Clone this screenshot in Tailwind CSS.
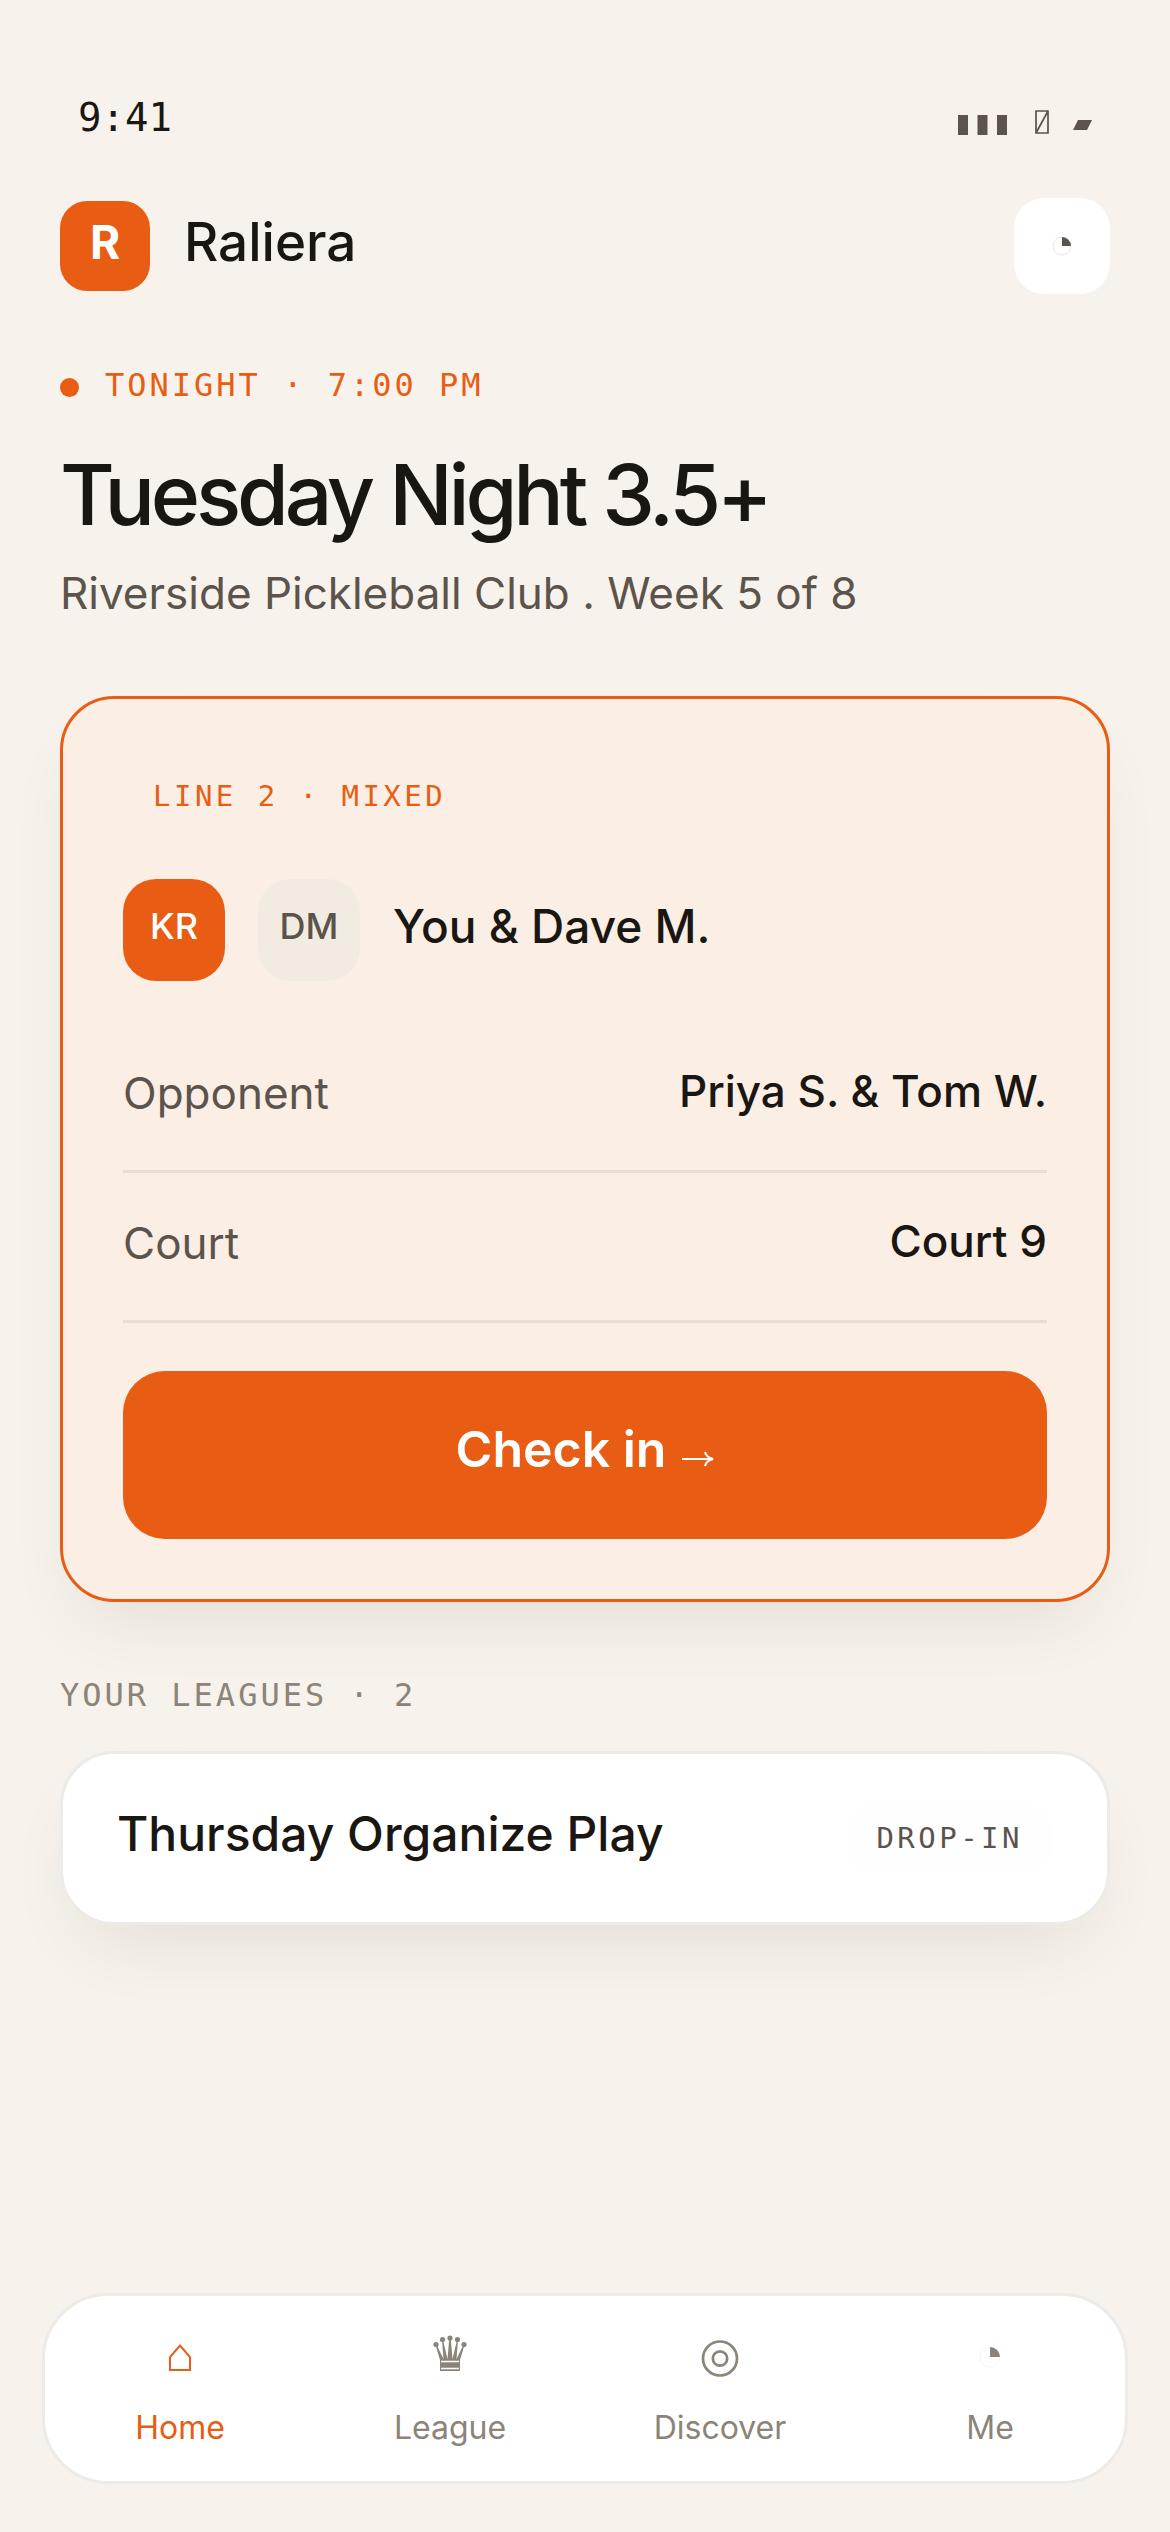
<!DOCTYPE html>
<html lang="en">

<head>
    <meta charset="UTF-8" />
    <meta name="viewport" content="width=device-width, initial-scale=1.0" />
    <script src="https://cdn.jsdelivr.net/npm/@tailwindcss/browser@4"></script>
    <title>Raliera</title>
</head>

<body class="bg-[#f7f2eb] text-[#1a1612] font-['Inter',sans-serif] flex flex-col min-h-screen">
    <div class="flex items-center justify-between h-15 mt-[88px] px-[78px] font-['DejaVu_Sans_Mono',monospace]">
        <p class="text-[39px] leading-15">9:41</p>
        <svg class="w-[134px] h-6 mt-3 overflow-visible" viewBox="0 0 134 24" fill="#5c544c" aria-hidden="true">
            <path d="M0 3h10v20H0zM19.500 3h10v20h-10zM39 3h10v20H39z" />
            <path d="M78 -1h12v22H78zM78 21L90 -1" fill="none" stroke="#5c544c" stroke-width="1.700" />
            <path d="M120 8h14l-5 10h-14z" />
        </svg>
    </div>

    <header class="flex items-center justify-between mt-[50px] px-15">
        <a class="flex items-center gap-[34px]" href="/">
            <span class="flex justify-center items-center size-[90px] pb-2 rounded-[27px] bg-[#e85d13] text-white text-[46px] leading-[54px] font-bold">R</span>
            <span class="pb-2 text-[53px] leading-15 font-medium">Raliera</span>
        </a>
        <button type="button" aria-label="Activity" class="flex items-center justify-center size-24 rounded-[30px] bg-white">
            <svg class="size-5" viewBox="0 0 20 20">
                <circle cx="10" cy="10" r="9" fill="none" stroke="#d8d5d1" stroke-width="0.600" />
                <path d="M10 1a9 9 0 0 1 9 9h-9z" fill="#5c544c" />
            </svg>
        </button>
    </header>

    <main class="flex-1 px-15 pt-[73px] pb-12">
        <p class="flex items-center gap-[26px] text-[#e85d13] font-['DejaVu_Sans_Mono',monospace] text-[32px] leading-9 tracking-[3px]">
            <span class="size-[19px] mt-1 rounded-full bg-[#e85d13]"></span>
            TONIGHT · 7:00 PM
        </p>
        <h1 class="mt-[47px] text-[84px] leading-[90px] font-medium tracking-tighter">Tuesday Night 3.5+</h1>
        <p class="mt-[26px] text-[44px] leading-[54px] text-[#5c544c]">Riverside Pickleball Club . Week 5 of 8</p>

        <section class="mt-[76px] p-15 rounded-[54px] border-3 border-[#e85d13] bg-[#fbeee4] shadow-[0_36px_72px_-24px_rgba(40,40,20,0.1)]">
            <p class="px-[30px] text-[#e85d13] font-['DejaVu_Sans_Mono',monospace] text-[29px] leading-[75px] tracking-[0.12em]">LINE 2 · MIXED</p>
            <div class="flex items-center gap-[33px] mt-[45px]">
                <span class="flex items-center justify-center size-[102px] pb-2 rounded-[33px] bg-[#e85d13] text-white text-[36px] leading-12 font-medium">KR</span>
                <span class="flex items-center justify-center size-[102px] pb-2 rounded-[33px] bg-[#f2ebe1] text-[#5c544c] text-[36px] leading-12 font-medium">DM</span>
                <p class="pb-2 text-[46px] leading-15 font-medium">You &amp; Dave M.</p>
            </div>
            <dl class="mt-[42px]">
                <div class="flex items-center justify-between pt-9 pb-[47px] border-b-3 border-[#e9dcd2]">
                    <dt class="pt-1 text-[44px] leading-15 text-[#5c544c]">Opponent</dt>
                    <dd class="text-[44px] leading-15 font-medium">Priya S. &amp; Tom W.</dd>
                </div>
                <div class="flex items-center justify-between pt-9 pb-[47px] border-b-3 border-[#e9dcd2]">
                    <dt class="pt-1 text-[44px] leading-15 text-[#5c544c]">Court</dt>
                    <dd class="text-[44px] leading-15 font-medium">Court 9</dd>
                </div>
            </dl>
            <button type="button" class="flex items-center justify-center gap-4 w-full h-42 mt-12 pb-3 rounded-[42px] bg-[#e85d13] text-white text-[50px] leading-15 font-semibold">
                Check in
                <svg class="w-8 h-4 mt-5" viewBox="0 0 32 16" fill="none" stroke="currentColor" stroke-width="2">
                    <path d="M0 8h30M23 1c1 4 4 6 8 7c-4 1-7 3-8 7" />
                </svg>
            </button>
        </section>

        <h2 class="mt-[75px] text-[#8c8478] font-['DejaVu_Sans_Mono',monospace] text-[32px] leading-9 tracking-[3px]">YOUR LEAGUES · 2</h2>
        <a href="#" class="flex items-center justify-between h-[174px] mt-[38px] px-[54px] rounded-[54px] border-3 border-[#ecebe8] bg-white shadow-[0_36px_72px_-24px_rgba(40,40,20,0.1)]">
            <span class="pb-2 text-[48px] leading-15 font-medium">Thursday Organize Play</span>
            <span class="px-[30px] rounded-[27px] bg-[#fefefe] text-[#5c544c] font-['DejaVu_Sans_Mono',monospace] text-[29px] leading-[69px] tracking-[0.12em]">DROP-IN</span>
        </a>
    </main>

    <nav class="grid grid-cols-4 mx-[42px] mb-12 pt-9 pb-[35px] rounded-[66px] border-3 border-[#ecebe8] bg-white text-[32px] leading-9 text-[#8c8478]">
        <a href="#" class="flex flex-col items-center gap-[30px] text-[#e85d13]">
            <svg class="size-12" viewBox="0 0 48 48" fill="none" stroke="currentColor" stroke-width="2">
                <path d="M14 38V25L24 13.500L34 25V38z" />
            </svg>
            Home
        </a>
        <a href="#" class="flex flex-col items-center gap-[30px]">
            <svg class="size-12" viewBox="0 0 48 48" fill="currentColor">
                <circle cx="10" cy="12.500" r="2.600" />
                <circle cx="16.500" cy="7.500" r="2.600" />
                <circle cx="24" cy="6" r="2.600" />
                <circle cx="31.500" cy="7.500" r="2.600" />
                <circle cx="38" cy="12.500" r="2.600" />
                <path d="M9.500 13L14 28V39H34V28L38.500 13L37.500 12.500L30.500 27L32 8H31L26.500 27L24.800 7H23.200L21.500 27L17 8H16L17.500 27L10.500 12.500z" />
                <path d="M15 29.500H33M15 36.500H33" stroke="#fff" stroke-width="1.300" />
            </svg>
            League
        </a>
        <a href="#" class="flex flex-col items-center gap-[30px]">
            <svg class="size-12" viewBox="0 0 48 48" fill="none" stroke="currentColor" stroke-width="2.700">
                <circle cx="24" cy="26.500" r="17" />
                <circle cx="24" cy="26.500" r="7.200" />
            </svg>
            Discover
        </a>
        <a href="#" class="flex flex-col items-center gap-[30px]">
            <svg class="size-12" viewBox="0 0 48 48">
                <circle cx="24" cy="25" r="10" fill="none" stroke="#ecebe8" stroke-width="0.500" />
                <path d="M24 15a10 10 0 0 1 10 10H24z" fill="currentColor" />
            </svg>
            Me
        </a>
    </nav>
</body>

</html>
